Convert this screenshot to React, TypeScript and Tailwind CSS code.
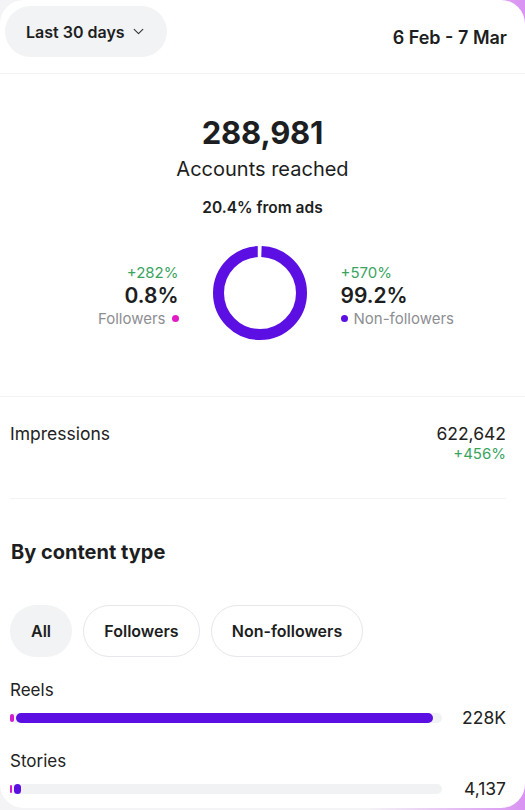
import React from "react";

const PURPLE = "#5b0fe3";

function Donut() {
  const r = 41.5;
  const c = 2 * Math.PI * r;
  const gap = 3;
  return (
    <svg width="96" height="96" viewBox="0 0 96 96">
      <circle
        cx="48"
        cy="48"
        r={r}
        fill="none"
        stroke={PURPLE}
        strokeWidth="11"
        strokeDasharray={`${c - gap} ${gap}`}
        strokeDashoffset={-gap / 2}
        transform="rotate(-90 48 48)"
      />
      <line x1="47" y1="0" x2="47" y2="14" stroke="#fff" strokeWidth="2.5" />
    </svg>
  );
}

function Bar({
  pct,
  value,
  label,
  magentaW,
  purpleLeft,
}: {
  pct: number;
  value: string;
  label: string;
  magentaW: number;
  purpleLeft: number;
}) {
  return (
    <div className="flex flex-col">
      <div className="text-[17px] text-[#222] leading-[22px]">{label}</div>
      <div className="mt-[4px] flex items-center">
        <div className="relative h-[10px] w-[432px] rounded-full bg-[#f1f2f4]">
          <div
            className="absolute left-0 top-[1px] h-[8px] rounded-full bg-[#d41bd0]"
            style={{ width: `${magentaW}px` }}
          />
          <div
            className="absolute top-0 h-[10px] rounded-full"
            style={{ left: `${purpleLeft}px`, width: `${pct}px`, background: PURPLE }}
          />
        </div>
        <div className="flex-1 text-right text-[17.5px] text-[#222]">{value}</div>
      </div>
    </div>
  );
}

export default function App() {
  return (
    <div
      className="w-[525px] h-[810px] overflow-hidden bg-[linear-gradient(90deg,#f4f4f6_0%,#f4f4f6_70%,#d993f2_100%)]"
      style={{ fontFamily: "Inter, 'Noto Sans', sans-serif" }}
    >
      <div className="h-[808px] w-[525px] rounded-[24px] bg-white overflow-hidden">
        {/* header */}
        <div className="flex items-center justify-between pl-[5px] pr-[18px] pt-[6px] pb-[16px] border-b border-[#f3f3f5]">
          <div className="flex h-[51px] w-[162px] items-center gap-[7px] rounded-full bg-[#f2f3f5] pl-[21px] text-[16px] font-semibold text-[#1c1e21]">
            <span>Last 30 days</span>
            <svg width="13" height="13" viewBox="0 0 24 24" fill="none" stroke="#333" strokeWidth="2" strokeLinecap="round" strokeLinejoin="round">
              <polyline points="4 8 12 16 20 8" />
            </svg>
          </div>
          <div className="mt-[12px] text-[18px] font-semibold text-[#1c1e21]">6 Feb - 7 Mar</div>
        </div>

        {/* reach */}
        <div className="flex flex-col items-center border-b border-[#f3f3f5] pb-[55px]">
          <div className="mt-[40px] text-[31px] font-bold leading-[38px] text-[#1c1e21] tracking-[-0.2px]">288,981</div>
          <div className="mt-[4px] text-[20px] leading-[26px] text-[#1c1e21]">Accounts reached</div>
          <div className="mt-[16px] text-[15.5px] font-semibold leading-[20px] text-[#1c1e21]">20.4% from ads</div>
          <div className="mt-[27px] mr-[6px] flex items-center gap-[33px]">
            <div className="flex w-[150px] flex-col items-end pt-[6px]">
              <div className="text-[15px] leading-[18px] text-[#3aa45f]">+282%</div>
              <div className="text-[21px] font-semibold leading-[27px] text-[#1c1e21]">0.8%</div>
              <div className="flex items-center gap-[6px] text-[15px] leading-[20px] text-[#8e8e93]">
                Followers <span className="h-[7px] w-[7px] rounded-full bg-[#e01cc4]" />
              </div>
            </div>
            <Donut />
            <div className="flex w-[150px] flex-col items-start pt-[6px]">
              <div className="text-[15px] leading-[18px] text-[#3aa45f]">+570%</div>
              <div className="text-[21px] font-semibold leading-[27px] text-[#1c1e21]">99.2%</div>
              <div className="flex items-center gap-[6px] text-[15px] leading-[20px] text-[#8e8e93]">
                <span className="h-[7px] w-[7px] rounded-full" style={{ background: PURPLE }} /> Non-followers
              </div>
            </div>
          </div>
        </div>

        {/* impressions */}
        <div className="ml-[10px] mr-[19px] flex justify-between border-b border-[#f3f3f5] pt-[26px] pb-[35px]">
          <div className="text-[17.5px] leading-[22px] text-[#222]">Impressions</div>
          <div className="flex flex-col items-end">
            <div className="text-[17.5px] leading-[22px] text-[#222]">622,642</div>
            <div className="text-[15px] leading-[18px] text-[#3aa45f]">+456%</div>
          </div>
        </div>

        {/* content type */}
        <div className="pl-[10px] pr-[19px]">
          <div className="mt-[40px] pl-[1px] text-[20px] font-bold leading-[26px] text-[#1c1e21]">By content type</div>
          <div className="mt-[40px] flex gap-[11px]">
            <div className="flex h-[52px] w-[62px] items-center justify-center rounded-full bg-[#f2f3f5] text-[16px] font-semibold text-[#1c1e21]">All</div>
            <div className="flex h-[52px] w-[117px] items-center justify-center rounded-full border border-[#e6e7ea] text-[16px] font-semibold text-[#1c1e21]">Followers</div>
            <div className="flex h-[52px] w-[152px] items-center justify-center rounded-full border border-[#e6e7ea] text-[16px] font-semibold text-[#1c1e21]">Non-followers</div>
          </div>
          <div className="mt-[22px] flex flex-col gap-[19px]">
            <Bar label="Reels" value="228K" magentaW={4} purpleLeft={6} pct={417} />
            <Bar label="Stories" value="4,137" magentaW={2} purpleLeft={4} pct={7} />
          </div>
        </div>
      </div>
    </div>
  );
}
